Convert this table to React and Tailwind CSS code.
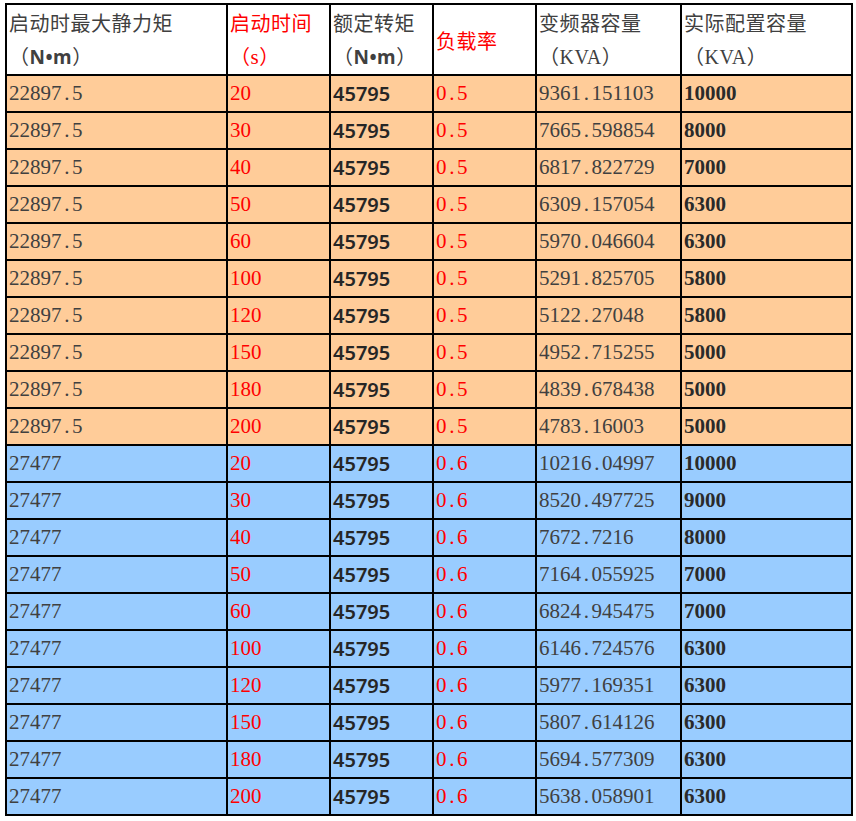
import React from "react";

const orangeRows = [
  ["20", "9361.151103", "10000"],
  ["30", "7665.598854", "8000"],
  ["40", "6817.822729", "7000"],
  ["50", "6309.157054", "6300"],
  ["60", "5970.046604", "6300"],
  ["100", "5291.825705", "5800"],
  ["120", "5122.27048", "5800"],
  ["150", "4952.715255", "5000"],
  ["180", "4839.678438", "5000"],
  ["200", "4783.16003", "5000"],
];

const blueRows = [
  ["20", "10216.04997", "10000"],
  ["30", "8520.497725", "9000"],
  ["40", "7672.7216", "8000"],
  ["50", "7164.055925", "7000"],
  ["60", "6824.945475", "7000"],
  ["100", "6146.724576", "6300"],
  ["120", "5977.169351", "6300"],
  ["150", "5807.614126", "6300"],
  ["180", "5694.577309", "6300"],
  ["200", "5638.058901", "6300"],
];

// digits in the sheet are half-width, the dot takes a full digit cell
const Num = ({ value }) => (
  <>
    {value.split("").map((ch, i) =>
      ch === "." ? (
        <span key={i} className="inline-block w-[10.5px] text-center">
          .
        </span>
      ) : (
        <span key={i}>{ch}</span>
      )
    )}
  </>
);

const cell = "border-2 border-black pl-[2px] align-middle whitespace-nowrap";
const head = "border-2 border-black pl-[2px] pt-[1px] pb-0 align-middle whitespace-nowrap text-left font-normal leading-[33px]";
const thin = "font-['Liberation_Serif',serif] text-[21px] text-[#404040]";
const cjk = "font-['Noto_Sans_CJK_SC',sans-serif] text-[20px] tracking-[0.5px]";

const Row = ({ first, time, load, kva, real, bg }) => (
  <tr className={`h-[37px] ${bg}`}>
    <td className={`${cell} ${thin}`}>
      <Num value={first} />
    </td>
    <td className={`${cell} ${thin} text-[#ff0000]`}>
      <Num value={time} />
    </td>
    <td className={`${cell} font-['Noto_Sans',sans-serif] font-semibold text-[20px] text-[#262626]`}>
      45795
    </td>
    <td className={`${cell} ${thin} text-[#ff0000]`}>
      <Num value={load} />
    </td>
    <td className={`${cell} ${thin}`}>
      <Num value={kva} />
    </td>
    <td className={`${cell} font-['Liberation_Serif',serif] font-bold text-[21px] text-[#2a2a2a]`}>
      {real}
    </td>
  </tr>
);

export default function App() {
  return (
    <div className="bg-white w-[856px] h-[821px] pt-[3px] pl-[5px]">
      <table className="table-fixed border-collapse leading-none">
        <colgroup>
          <col className="w-[221px]" />
          <col className="w-[103px]" />
          <col className="w-[103px]" />
          <col className="w-[103px]" />
          <col className="w-[145px]" />
          <col className="w-[171px]" />
        </colgroup>
        <thead>
          <tr className="h-[67px] bg-white">
            <th className={`${head} text-[#404040]`}>
              <div className={cjk}>启动时最大静力矩</div>
              <div className={cjk}>
                （<span className="font-['Noto_Sans',sans-serif] font-bold text-[19px]">N•m</span>）
              </div>
            </th>
            <th className={`${head} text-[#ff0000]`}>
              <div className={cjk}>启动时间</div>
              <div className={cjk}>
                （<span className="font-['Liberation_Serif',serif] text-[21px]">s</span>）
              </div>
            </th>
            <th className={`${head} text-[#404040]`}>
              <div className={cjk}>额定转矩</div>
              <div className={cjk}>
                （<span className="font-['Noto_Sans',sans-serif] font-bold text-[19px]">N•m</span>）
              </div>
            </th>
            <th className={`${head} text-[#ff0000]`}>
              <div className={cjk}>负载率</div>
            </th>
            <th className={`${head} text-[#404040]`}>
              <div className={cjk}>变频器容量</div>
              <div className={cjk}>
                （<span className="font-['Liberation_Serif',serif] text-[20px]">KVA</span>）
              </div>
            </th>
            <th className={`${head} text-[#404040]`}>
              <div className={cjk}>实际配置容量</div>
              <div className={cjk}>
                （<span className="font-['Liberation_Serif',serif] text-[20px]">KVA</span>）
              </div>
            </th>
          </tr>
        </thead>
        <tbody>
          {orangeRows.map(([t, k, r]) => (
            <Row key={"o" + t} first="22897.5" time={t} load="0.5" kva={k} real={r} bg="bg-[#ffcc99]" />
          ))}
          {blueRows.map(([t, k, r]) => (
            <Row key={"b" + t} first="27477" time={t} load="0.6" kva={k} real={r} bg="bg-[#99ccff]" />
          ))}
        </tbody>
      </table>
    </div>
  );
}
